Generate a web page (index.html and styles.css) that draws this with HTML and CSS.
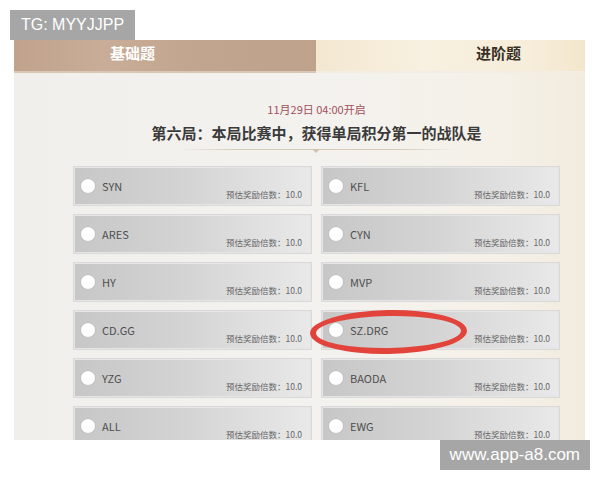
FILE: index.html
```html
<!DOCTYPE html>
<html lang="zh-CN">
<head>
<meta charset="utf-8">
<link rel="stylesheet" href="styles.css">
</head>
<body>
<div class="tg">TG: MYYJJPP</div>
<div class="shot">
  <div class="tabs">
    <div class="tab tab-basic">基础题</div>
    <div class="tab tab-adv">进阶题</div>
  </div>
  <div class="content">
    <div class="date">11月29日 04:00开启</div>
    <div class="title">第六局：本局比赛中，获得单局积分第一的战队是</div>
    <div class="divider"><span class="chev"></span></div>
    <div class="grid">
      <div class="card"><span class="radio"></span><span class="name">SYN</span><span class="reward">预估奖励倍数：10.0</span></div>
      <div class="card"><span class="radio"></span><span class="name">KFL</span><span class="reward">预估奖励倍数：10.0</span></div>
      <div class="card"><span class="radio"></span><span class="name">ARES</span><span class="reward">预估奖励倍数：10.0</span></div>
      <div class="card"><span class="radio"></span><span class="name">CYN</span><span class="reward">预估奖励倍数：10.0</span></div>
      <div class="card"><span class="radio"></span><span class="name">HY</span><span class="reward">预估奖励倍数：10.0</span></div>
      <div class="card"><span class="radio"></span><span class="name">MVP</span><span class="reward">预估奖励倍数：10.0</span></div>
      <div class="card"><span class="radio"></span><span class="name">CD.GG</span><span class="reward">预估奖励倍数：10.0</span></div>
      <div class="card"><span class="radio"></span><span class="name">SZ.DRG</span><span class="reward">预估奖励倍数：10.0</span></div>
      <div class="card"><span class="radio"></span><span class="name">YZG</span><span class="reward">预估奖励倍数：10.0</span></div>
      <div class="card"><span class="radio"></span><span class="name">BAODA</span><span class="reward">预估奖励倍数：10.0</span></div>
      <div class="card"><span class="radio"></span><span class="name">ALL</span><span class="reward">预估奖励倍数：10.0</span></div>
      <div class="card"><span class="radio"></span><span class="name">EWG</span><span class="reward">预估奖励倍数：10.0</span></div>
    </div>
  </div>
  <div class="circle-mark"></div>
</div>
<div class="site"><span class="site-label">www.app-a8.com</span></div>
</body>
</html>
```
FILE: styles.css
```css
html, body {
  margin: 0;
  padding: 0;
  background: #ffffff;
}
body {
  width: 600px;
  height: 480px;
  overflow: hidden;
  font-family: "Noto Sans CJK SC", "Noto Sans", sans-serif;
}
.tg {
  width: fit-content;
  margin: 10px 0 0 10px;
  height: 30px;
  padding: 0 11px;
  background: #a6a6a6;
  color: #ffffff;
  font: 16px/30px "Liberation Sans", Arial, sans-serif;
}
.shot {
  position: relative;
  margin-left: 14px;
  width: 571px;
  height: 400px;
  overflow: hidden;
  background: linear-gradient(to right, #f1efec 0%, #f4f2ef 55%, #f5f1e8 85%, #f2ebde 100%);
}
.tabs {
  display: flex;
  height: 33px;
}
.tab {
  font-weight: 700;
  font-size: 15px;
  line-height: 26px;
  box-sizing: border-box;
}
.tab-basic {
  width: 302px;
  padding-left: 96px;
  color: #ffffff;
  background: linear-gradient(to right, #c1a38c 0%, #c9ad98 30%, #c2a58e 60%, #bfa28b 100%);
  border-bottom: 2px solid #d8c6b8;
}
.tab-adv {
  flex: 1;
  padding-left: 160px;
  color: #3a3026;
  background: linear-gradient(to right, #f3e7d0 0%, #f8f0e0 40%, #f6edda 80%, #f3e6cc 100%);
  border-bottom: 2px solid #f3ede3;
}
.content {
  margin-left: 59px;
  width: 487px;
  display: flex;
  flex-direction: column;
  align-items: center;
}
.date {
  margin-top: 29px;
  font-size: 11px;
  line-height: 14px;
  color: #a2505a;
}
.title {
  margin-top: 7px;
  font-size: 15px;
  line-height: 20px;
  font-weight: 700;
  color: #3a3a3a;
}
.divider {
  position: relative;
  margin-top: 6px;
  width: 279px;
  height: 1px;
  background: linear-gradient(to right, rgba(210,200,185,0), #d6cbbb 20%, #d6cbbb 80%, rgba(210,200,185,0));
}
.chev {
  position: absolute;
  left: 135px;
  top: 0;
  width: 0;
  height: 0;
  border-left: 4px solid transparent;
  border-right: 4px solid transparent;
  border-top: 4px solid #cfc3b0;
}
.grid {
  margin-top: 16px;
  display: grid;
  grid-template-columns: 239px 239px;
  column-gap: 9px;
  row-gap: 8px;
}
.card {
  box-sizing: border-box;
  height: 40px;
  display: flex;
  align-items: center;
  padding: 0 9px 0 7px;
  border: 1px solid #d9d9d9;
  background: linear-gradient(to right, #c7c7c7 0%, #d3d3d3 45%, #e3e3e3 85%, #e9e9e9 100%);
  box-shadow: inset 0 0 0 1px #e6e6e6;
}
.radio {
  width: 14px;
  height: 14px;
  border-radius: 50%;
  background: #ffffff;
  box-shadow: 0 0 2px rgba(0,0,0,0.12);
  flex: none;
}
.name {
  margin-left: 7px;
  font-size: 11px;
  color: #4e4e4e;
  line-height: 14px;
}
.reward {
  margin-left: auto;
  align-self: flex-end;
  margin-bottom: 5px;
  font-size: 8.5px;
  line-height: 11px;
  color: #666666;
}
.circle-mark {
  position: absolute;
  left: 296px;
  top: 270px;
  width: 157px;
  height: 44px;
  box-sizing: border-box;
  border: 6px solid #e2433a;
  border-radius: 50%;
  transform: rotate(-1deg);
}
.site {
  display: flex;
  justify-content: flex-end;
  padding-right: 10px;
}
.site-label {
  height: 30px;
  padding: 0 10px;
  background: #a6a6a6;
  color: #ffffff;
  font: 17px/30px "Liberation Sans", Arial, sans-serif;
}
```
